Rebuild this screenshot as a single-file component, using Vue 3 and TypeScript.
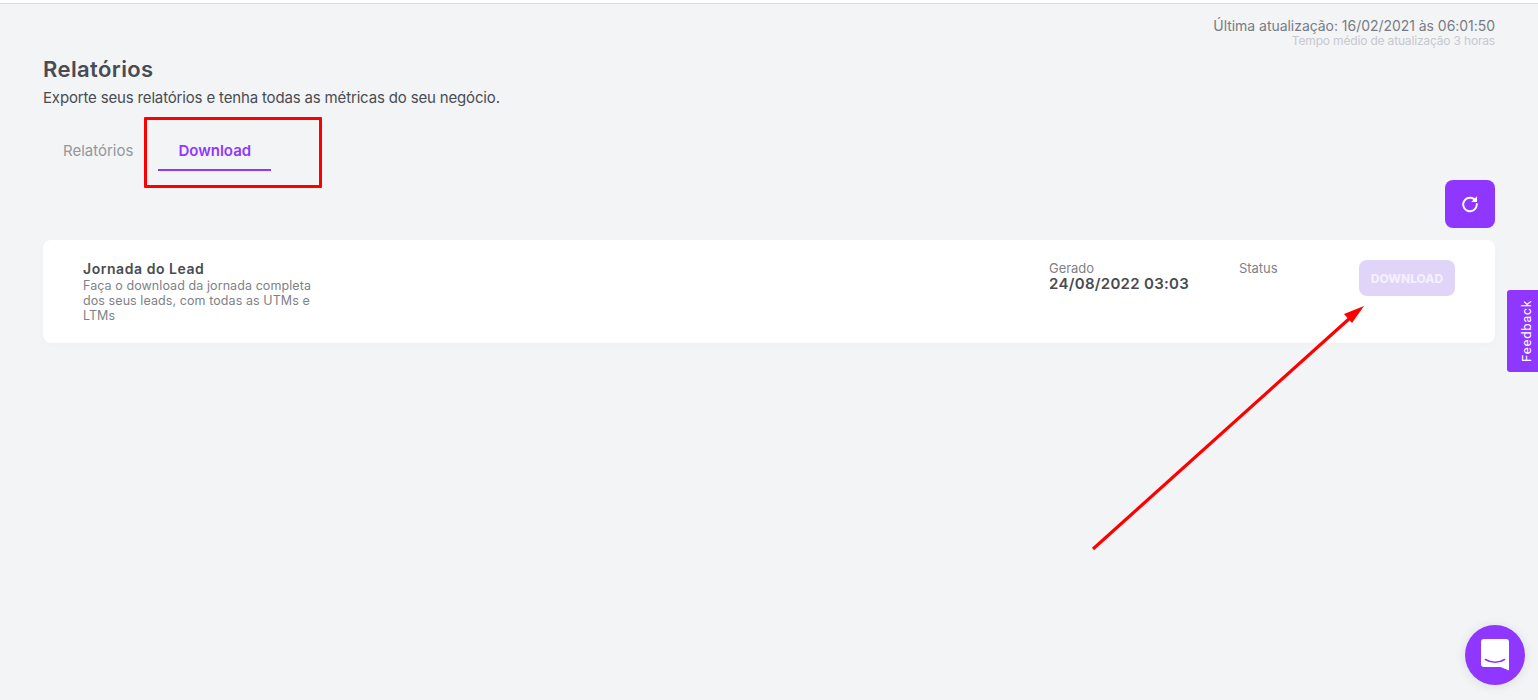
<script setup lang="ts">
const report = {
  title: 'Jornada do Lead',
  description: 'Faça o download da jornada completa dos seus leads, com todas as UTMs e LTMs',
  generated: '24/08/2022 03:03',
}
</script>

<template>
  <div class="page">
    <div class="update-info">
      <div class="update-main">Última atualização: 16/02/2021 às 06:01:50</div>
      <div class="update-sub">Tempo médio de atualização 3 horas</div>
    </div>

    <h1 class="title">Relatórios</h1>
    <p class="subtitle">Exporte seus relatórios e tenha todas as métricas do seu negócio.</p>

    <div class="tabs">
      <div class="tab">Relatórios</div>
      <div class="tab active">Download</div>
    </div>

    <div class="toolbar">
      <button class="refresh" aria-label="Atualizar">
        <svg width="18" height="18" viewBox="0 0 18 18" fill="none">
          <path d="M14.800 5.900A6.800 6.800 0 1 0 15.800 9" stroke="#fff" stroke-width="1.900" stroke-linecap="round" />
          <path d="M16 1.300v5.700h-5.700z" fill="#fff" />
        </svg>
      </button>
    </div>

    <div class="card">
      <div class="card-info">
        <div class="card-title">{{ report.title }}</div>
        <div class="card-desc">{{ report.description }}</div>
      </div>
      <div class="card-generated">
        <div class="label">Gerado</div>
        <div class="date">{{ report.generated }}</div>
      </div>
      <div class="card-status">
        <div class="label">Status</div>
      </div>
      <button class="download" disabled>DOWNLOAD</button>
    </div>

    <!-- anotacoes por cima do print -->
    <div class="red-box"></div>
    <svg class="arrow" width="1538" height="700" viewBox="0 0 1538 700" fill="none">
      <path d="M1093 549L1350 318" stroke="#f00" stroke-width="3.200" />
      <path d="M1364 306L1344 314L1352 323z" fill="#f00" />
    </svg>

    <div class="feedback"><span>Feedback</span></div>

    <div class="chat">
      <svg width="28" height="32" viewBox="0 0 28 32">
        <path d="M3 0h22a3 3 0 0 1 3 3v28.500l-8.500-3.500H3a3 3 0 0 1-3-3V3a3 3 0 0 1 3-3z" fill="#fff" />
        <path d="M4.500 20.500c5.500 3.700 13.500 3.700 19 0" stroke="#8f37ff" stroke-width="1.600" fill="none" stroke-linecap="round" />
      </svg>
    </div>
  </div>
</template>

<style>
body {
  margin: 0;
}
</style>

<style scoped>
.page {
  position: relative;
  box-sizing: border-box;
  height: 697px;
  margin-top: 3px;
  overflow: hidden;
  padding: 0 43px;
  background: #f3f4f6;
  border-top: 1px solid #dcdcdc;
  font-family: Inter, "Noto Sans", sans-serif;
  color: #484c52;
}

.update-info {
  padding-top: 13px;
  text-align: right;
}

.update-main {
  font-size: 14px;
  line-height: 17px;
  color: #777c84;
  letter-spacing: -0.04px;
}

.update-sub {
  font-size: 12px;
  line-height: 14px;
  color: #c6c9d0;
  letter-spacing: -0.17px;
}

.title {
  margin: 6px 0 0;
  font-size: 22px;
  line-height: 30px;
  font-weight: 600;
  letter-spacing: 0.4px;
}

.subtitle {
  margin: 4px 0 0;
  font-size: 15px;
  line-height: 20px;
  letter-spacing: -0.16px;
}

.tabs {
  display: flex;
  gap: 5px;
  margin-top: 23px;
}

.tab {
  padding: 0 20px;
  font-size: 15px;
  line-height: 40px;
  height: 40px;
  color: #94979c;
  letter-spacing: 0;
}

.tab.active {
  width: 113px;
  box-sizing: border-box;
  font-weight: 600;
  color: #8f37ff;
  border-bottom: 2px solid #8f37ff;
  letter-spacing: 0;
}

.toolbar {
  display: flex;
  justify-content: flex-end;
  margin-top: 9px;
}

.refresh {
  display: flex;
  align-items: center;
  justify-content: center;
  width: 50px;
  height: 48px;
  padding: 0;
  border: 0;
  border-radius: 8px;
  background: #8f37ff;
}

.card {
  display: flex;
  align-items: flex-start;
  box-sizing: border-box;
  height: 103px;
  margin-top: 12px;
  padding: 20px 40px;
  border-radius: 8px;
  background: #fff;
  box-shadow: 0 2px 6px rgba(0, 0, 0, 0.02);
}

.card-info {
  width: 236px;
}

.card-title {
  font-size: 14px;
  line-height: 18px;
  font-weight: 600;
  letter-spacing: 0.55px;
}

.card-desc {
  font-size: 12.500px;
  line-height: 15px;
  color: #7e8288;
  letter-spacing: 0.08px;
}

.card-generated {
  margin-left: 730px;
  width: 190px;
}

.card-status {
  width: 120px;
}

.label {
  font-size: 13px;
  line-height: 16px;
  color: #7e8288;
  letter-spacing: -0.05px;
}

.date {
  font-size: 15px;
  line-height: 16px;
  font-weight: 600;
  letter-spacing: 0.3px;
}

.download {
  width: 96px;
  height: 36px;
  padding: 0;
  border: 0;
  border-radius: 8px;
  background: #e0d4f9;
  color: #f4f0fe;
  font-family: inherit;
  font-size: 12px;
  font-weight: 800;
  letter-spacing: 0;
}

.red-box {
  position: absolute;
  left: 144px;
  top: 113px;
  width: 178px;
  height: 71px;
  box-sizing: border-box;
  border: 3px solid #f00;
  border-radius: 1px;
}

.arrow {
  position: absolute;
  left: 0;
  top: -4px;
  pointer-events: none;
}

.feedback {
  position: absolute;
  left: 1507px;
  top: 286px;
  display: flex;
  align-items: center;
  justify-content: center;
  box-sizing: border-box;
  width: 31px;
  height: 82px;
  padding-left: 7px;
  border-radius: 3px 0 0 3px;
  background: #8f37ff;
}

.feedback span {
  writing-mode: vertical-rl;
  transform: rotate(180deg);
  color: #fff;
  font-family: Roboto, sans-serif;
  font-size: 13px;
  font-weight: 400;
  letter-spacing: 0.75px;
}

.chat {
  position: absolute;
  left: 1465px;
  top: 621px;
  display: flex;
  align-items: center;
  justify-content: center;
  width: 60px;
  height: 60px;
  border-radius: 50%;
  background: #8f37ff;
  box-shadow: 0 1px 12px rgba(0, 0, 0, 0.1);
}
</style>
